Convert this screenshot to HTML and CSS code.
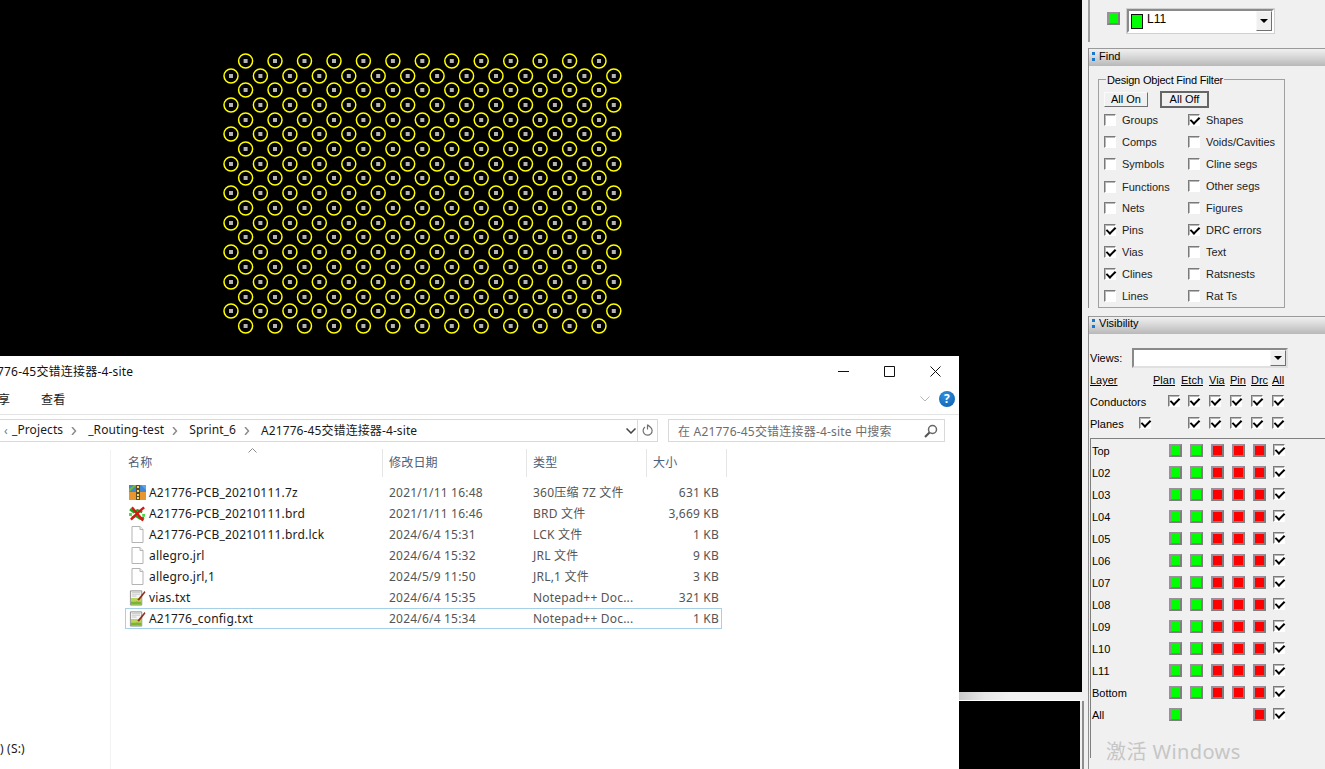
FILE: index.html
```html
<!DOCTYPE html>
<html lang="zh-CN">
<head>
<meta charset="utf-8">
<title>Allegro</title>
<link rel="stylesheet" href="styles.css">
</head>
<body>
<svg class="defs" width="0" height="0" aria-hidden="true">
  <defs>
    <g id="via">
      <circle r="7" fill="none" stroke="#ffff00" stroke-width="1.5"/>
      <rect x="-2" y="-2" width="4" height="4" fill="#b4b4b4"/>
    </g>
    <g id="row-a">
      <use href="#via" x="245.6"/><use href="#via" x="275"/><use href="#via" x="304.5"/><use href="#via" x="334"/><use href="#via" x="363.4"/><use href="#via" x="392.9"/><use href="#via" x="422.3"/><use href="#via" x="451.8"/><use href="#via" x="481.2"/><use href="#via" x="510.7"/><use href="#via" x="540.1"/><use href="#via" x="569.6"/><use href="#via" x="599"/>
    </g>
    <g id="row-b">
      <use href="#via" x="231"/><use href="#via" x="260.4"/><use href="#via" x="289.9"/><use href="#via" x="319.3"/><use href="#via" x="348.8"/><use href="#via" x="378.2"/><use href="#via" x="407.7"/><use href="#via" x="437.1"/><use href="#via" x="466.6"/><use href="#via" x="496"/><use href="#via" x="525.5"/><use href="#via" x="554.9"/><use href="#via" x="584.4"/><use href="#via" x="613.8"/>
    </g>
    <symbol id="i-doc" viewBox="0 0 16 17">
      <path d="M2.5 .5h8l3 3v13h-11z" fill="#fff" stroke="#b3b3b3"/>
      <path d="M10.5 .5v3h3" fill="#f0f0f0" stroke="#b3b3b3"/>
    </symbol>
    <symbol id="i-zip" viewBox="0 0 17 15">
      <rect y="0" width="17" height="7" fill="#3f86d6"/>
      <rect y="7" width="17" height="8" fill="#e8962e"/>
      <path d="M0 4l5-4h3L0 7z" fill="#6cbb3c"/>
      <path d="M12 0h5v5z" fill="#5aa7ea"/>
      <rect x="7" width="4" height="15" fill="#5b4a2a"/>
      <path d="M8 1h2v2H8zM8 5h2v2H8zM8 9h2v2H8zM8 12h2v2H8z" fill="#f6dc5c"/>
    </symbol>
    <symbol id="i-brd" viewBox="0 0 18 16">
      <path d="M1 3l4 3 4-2 5 2M3 12l4-2 5 3 4-1" fill="none" stroke="#18a818" stroke-width="2.4"/>
      <path d="M3 1l6 7 6 7M16 1L9 7l-7 7" fill="none" stroke="#d81818" stroke-width="2.6"/>
      <path d="M0 7h3v3H0zM14 8h3v3h-3z" fill="#48d848"/>
    </symbol>
    <symbol id="i-note" viewBox="0 0 18 17">
      <path d="M1.500 1.500h12v15h-12z" fill="#f6f6f6" stroke="#8a8a8a"/>
      <path d="M3 3h9M3 5h9M3 7h5" stroke="#c4c4c4"/>
      <path d="M2 9h11v7H2z" fill="#b6d85a"/>
      <path d="M2 13h11v3H2z" fill="#7db436"/>
      <path d="M16.500 1.500L9 10.500l-1 2.500 2.500-1L17.500 3z" fill="#8c2f1c"/>
      <path d="M9 10.500L8 13l2.500-1z" fill="#f3d48a"/>
    </symbol>
    <symbol id="i-sep" viewBox="0 0 6 8">
      <path d="M1 0l3.500 4L1 8" fill="none" stroke="#8c8c8c" stroke-width="1.500"/>
    </symbol>
  </defs>
</svg>

<div class="screen">
  <main class="canvas">
    <div class="board">
      <svg class="vias" width="1082" height="356" aria-label="via array">
        <use href="#row-a" y="61"/><use href="#row-b" y="76"/><use href="#row-a" y="90"/><use href="#row-b" y="105"/><use href="#row-a" y="120"/><use href="#row-b" y="134"/><use href="#row-a" y="149"/><use href="#row-b" y="164"/><use href="#row-a" y="178"/><use href="#row-b" y="193"/><use href="#row-a" y="208"/><use href="#row-b" y="223"/><use href="#row-a" y="237"/><use href="#row-b" y="252"/><use href="#row-a" y="267"/><use href="#row-b" y="282"/><use href="#row-a" y="297"/><use href="#row-b" y="311"/><use href="#row-a" y="326"/>
      </svg>
    </div>
    <div class="strip"></div>
    <div class="board-lower"></div>

    <section class="explorer">
      <header class="ex-title">
        <span class="ex-title-text">A21776-45交错连接器-4-site</span>
        <div class="ex-controls">
          <svg width="11" height="11" viewBox="0 0 11 11"><path d="M0 5.500h11" stroke="#111"/></svg>
          <svg width="11" height="11" viewBox="0 0 11 11"><path d="M.5 .5h10v10H.5z" fill="none" stroke="#111"/></svg>
          <svg width="11" height="11" viewBox="0 0 11 11"><path d="M.5 .5l10 10M10.500 .5l-10 10" stroke="#111"/></svg>
        </div>
      </header>
      <div class="ex-ribbon">
        <span class="tab-share">享</span>
        <span class="tab-view">查看</span>
        <svg class="rib-chev" width="10" height="6" viewBox="0 0 10 6"><path d="M.5 .5L5 5 9.500 .5" fill="none" stroke="#b5b5b5"/></svg>
        <span class="help">?</span>
      </div>
      <div class="ex-address">
        <div class="addr">
          <span class="crumb-back">‹</span>
          <span class="crumb">_Projects</span><svg class="sep" width="25" height="8"><use href="#i-sep" x="8" width="6" height="8"/></svg>
          <span class="crumb">_Routing-test</span><svg class="sep" width="25" height="8"><use href="#i-sep" x="8" width="6" height="8"/></svg>
          <span class="crumb">Sprint_6</span><svg class="sep" width="25" height="8"><use href="#i-sep" x="8" width="6" height="8"/></svg>
          <span class="crumb">A21776-45交错连接器-4-site</span>
          <svg class="addr-drop" width="10" height="6" viewBox="0 0 10 6"><path d="M.5 .5L5 5 9.500 .5" fill="none" stroke="#444" stroke-width="1.500"/></svg>
          <span class="addr-refresh">
            <svg width="12" height="13" viewBox="0 0 12 13"><path d="M8.500 3.200A4.500 4.500 0 1 1 3 3M5.500 .5v5M8.500 3.200L5.500 .8" fill="none" stroke="#707070" stroke-width="1.200"/></svg>
          </span>
        </div>
        <div class="search">
          <span>在 A21776-45交错连接器-4-site 中搜索</span>
          <svg width="14" height="14" viewBox="0 0 14 14"><circle cx="8.500" cy="5.500" r="4" fill="none" stroke="#666" stroke-width="1.500"/><path d="M5.500 8.500L1 13" stroke="#555" stroke-width="2.200"/></svg>
        </div>
      </div>
      <div class="ex-body">
        <nav class="ex-nav"><span class="drive">) (S:)</span></nav>
        <div class="ex-list">
          <div class="cols">
            <div class="col col-name">名称
              <svg class="caret" width="9" height="5" viewBox="0 0 9 5"><path d="M.5 4.500l4-4 4 4" fill="none" stroke="#8a8a8a"/></svg>
            </div>
            <div class="col">修改日期</div>
            <div class="col">类型</div>
            <div class="col">大小</div>
          </div>
          <div class="file">
            <div class="f-name"><svg class="ico" width="17" height="15"><use href="#i-zip"/></svg>A21776-PCB_20210111.7z</div>
            <div>2021/1/11 16:48</div><div>360压缩 7Z 文件</div><div class="f-size">631 KB</div>
          </div>
          <div class="file">
            <div class="f-name"><svg class="ico" width="17" height="16"><use href="#i-brd"/></svg>A21776-PCB_20210111.brd</div>
            <div>2021/1/11 16:46</div><div>BRD 文件</div><div class="f-size">3,669 KB</div>
          </div>
          <div class="file">
            <div class="f-name"><svg class="ico" width="17" height="17"><use href="#i-doc"/></svg>A21776-PCB_20210111.brd.lck</div>
            <div>2024/6/4 15:31</div><div>LCK 文件</div><div class="f-size">1 KB</div>
          </div>
          <div class="file">
            <div class="f-name"><svg class="ico" width="17" height="17"><use href="#i-doc"/></svg>allegro.jrl</div>
            <div>2024/6/4 15:32</div><div>JRL 文件</div><div class="f-size">9 KB</div>
          </div>
          <div class="file">
            <div class="f-name"><svg class="ico" width="17" height="17"><use href="#i-doc"/></svg>allegro.jrl,1</div>
            <div>2024/5/9 11:50</div><div>JRL,1 文件</div><div class="f-size">3 KB</div>
          </div>
          <div class="file">
            <div class="f-name"><svg class="ico" width="17" height="17"><use href="#i-note"/></svg>vias.txt</div>
            <div>2024/6/4 15:35</div><div>Notepad++ Doc...</div><div class="f-size">321 KB</div>
          </div>
          <div class="file file-sel">
            <div class="f-name"><svg class="ico" width="17" height="17"><use href="#i-note"/></svg>A21776_config.txt</div>
            <div>2024/6/4 15:34</div><div>Notepad++ Doc...</div><div class="f-size">1 KB</div>
          </div>
        </div>
      </div>
    </section>
  </main>

  <aside class="side">
    <div class="side-top">
      <span class="sw green sw-top"></span>
      <div class="combo">
        <span class="combo-sw"></span>
        <span class="combo-text">L11</span>
        <span class="drop"></span>
      </div>
    </div>

    <section class="panel panel-find">
      <h2 class="panel-head"><span class="grip"></span>Find</h2>
      <div class="group">
        <span class="legend">Design Object Find Filter</span>
        <div class="btns">
          <span class="btn">All On</span>
          <span class="btn btn-def">All Off</span>
        </div>
        <div class="filters">
          <label class="fl"><span class="cb"></span>Groups</label>
          <label class="fl"><span class="cb on"></span>Shapes</label>
          <label class="fl"><span class="cb"></span>Comps</label>
          <label class="fl"><span class="cb"></span>Voids/Cavities</label>
          <label class="fl"><span class="cb"></span>Symbols</label>
          <label class="fl"><span class="cb"></span>Cline segs</label>
          <label class="fl fl-low"><span class="cb"></span>Functions</label>
          <label class="fl"><span class="cb"></span>Other segs</label>
          <label class="fl"><span class="cb"></span>Nets</label>
          <label class="fl"><span class="cb"></span>Figures</label>
          <label class="fl"><span class="cb on"></span>Pins</label>
          <label class="fl"><span class="cb on"></span>DRC errors</label>
          <label class="fl"><span class="cb on"></span>Vias</label>
          <label class="fl"><span class="cb"></span>Text</label>
          <label class="fl"><span class="cb on"></span>Clines</label>
          <label class="fl"><span class="cb"></span>Ratsnests</label>
          <label class="fl"><span class="cb"></span>Lines</label>
          <label class="fl"><span class="cb"></span>Rat Ts</label>
        </div>
      </div>
    </section>

    <section class="panel panel-vis">
      <h2 class="panel-head panel-head-vis"><span class="grip"></span>Visibility</h2>
      <div class="views"><span>Views:</span><div class="views-box"><span class="drop"></span></div></div>
      <div class="vhead"><u>Layer</u><u>Plan</u><u>Etch</u><u>Via</u><u>Pin</u><u>Drc</u><u>All</u></div>
      <div class="vrow vrow-cond"><span>Conductors</span><span class="cb on"></span><span class="cb on"></span><span class="cb on"></span><span class="cb on"></span><span class="cb on"></span><span class="cb on"></span></div>
      <div class="vrow vrow-plane"><span>Planes</span><span class="cb on"></span><span class="cb on"></span><span class="cb on"></span><span class="cb on"></span><span class="cb on"></span><span class="cb on"></span></div>
      <div class="layers">
        <div class="lrow"><span>Top</span><span class="sw green"></span><span class="sw green"></span><span class="sw red"></span><span class="sw red"></span><span class="sw red"></span><span class="cb on"></span></div>
        <div class="lrow"><span>L02</span><span class="sw green"></span><span class="sw green"></span><span class="sw red"></span><span class="sw red"></span><span class="sw red"></span><span class="cb on"></span></div>
        <div class="lrow"><span>L03</span><span class="sw green"></span><span class="sw green"></span><span class="sw red"></span><span class="sw red"></span><span class="sw red"></span><span class="cb on"></span></div>
        <div class="lrow"><span>L04</span><span class="sw green"></span><span class="sw green"></span><span class="sw red"></span><span class="sw red"></span><span class="sw red"></span><span class="cb on"></span></div>
        <div class="lrow"><span>L05</span><span class="sw green"></span><span class="sw green"></span><span class="sw red"></span><span class="sw red"></span><span class="sw red"></span><span class="cb on"></span></div>
        <div class="lrow"><span>L06</span><span class="sw green"></span><span class="sw green"></span><span class="sw red"></span><span class="sw red"></span><span class="sw red"></span><span class="cb on"></span></div>
        <div class="lrow"><span>L07</span><span class="sw green"></span><span class="sw green"></span><span class="sw red"></span><span class="sw red"></span><span class="sw red"></span><span class="cb on"></span></div>
        <div class="lrow"><span>L08</span><span class="sw green"></span><span class="sw green"></span><span class="sw red"></span><span class="sw red"></span><span class="sw red"></span><span class="cb on"></span></div>
        <div class="lrow"><span>L09</span><span class="sw green"></span><span class="sw green"></span><span class="sw red"></span><span class="sw red"></span><span class="sw red"></span><span class="cb on"></span></div>
        <div class="lrow"><span>L10</span><span class="sw green"></span><span class="sw green"></span><span class="sw red"></span><span class="sw red"></span><span class="sw red"></span><span class="cb on"></span></div>
        <div class="lrow"><span>L11</span><span class="sw green"></span><span class="sw green"></span><span class="sw red"></span><span class="sw red"></span><span class="sw red"></span><span class="cb on"></span></div>
        <div class="lrow"><span>Bottom</span><span class="sw green"></span><span class="sw green"></span><span class="sw red"></span><span class="sw red"></span><span class="sw red"></span><span class="cb on"></span></div>
        <div class="lrow"><span>All</span><span class="sw green"></span><span></span><span></span><span></span><span class="sw red"></span><span class="cb on"></span></div>
      </div>
    </section>
    <div class="watermark">激活 Windows</div>
  </aside>
</div>
</body>
</html>
```

FILE: styles.css
```css
* { box-sizing: border-box; }
html, body { margin: 0; padding: 0; height: 100%; overflow: hidden; background: #000; }
body { font-family: "Noto Sans", "Noto Sans CJK SC", sans-serif; font-size: 12px; letter-spacing: .2px; color: #1a1a1a; }
.defs { position: absolute; }

.screen { display: flex; width: 1325px; height: 769px; }

/* board canvas */
.canvas { position: relative; width: 1082px; flex: none; display: flex; flex-direction: column; background: #000; }
.board { height: 692px; flex: none; position: relative; background: #000; }
.vias { position: absolute; left: 0; top: 0; display: block; }
.strip { height: 9px; flex: none; background: linear-gradient(90deg, #c9c9c9 959px, #e6e6e6 985px, #f0f0f0 1010px); border-bottom: 1px solid #fff; }
.board-lower { flex: 1; border-right: 2px solid #f0f0f0; }

/* explorer window */
.explorer { position: absolute; left: 0; top: 356px; width: 959px; height: 413px; background: #fff; display: flex; flex-direction: column; overflow: hidden; }
.ex-title { height: 30px; flex: none; display: flex; align-items: center; justify-content: space-between; padding-right: 18px; }
.ex-title-text { margin-left: -25px; color: #111; }
.ex-controls { display: flex; gap: 35px; align-items: center; }
.ex-controls svg { display: block; }
.ex-ribbon { height: 29px; flex: none; display: flex; align-items: center; border-bottom: 1px solid #e4e4e4; padding: 0 4px 2px 0; }
.tab-share { margin-left: -2px; width: 43px; }
.rib-chev { margin-left: auto; margin-right: 9px; }
.help { width: 16px; height: 16px; border-radius: 50%; background: radial-gradient(circle at 40% 30%, #2f8fe0, #0b5cab); color: #fff; font-weight: 700; font-size: 12px; line-height: 16px; text-align: center; }
.ex-address { height: 27px; flex: none; padding-top: 4px; display: flex; gap: 10px; padding-right: 14px; }
.addr { width: 658px; height: 23px; flex: none; display: flex; align-items: center; border: 1px solid #d9d9d9; border-left: 0; white-space: nowrap; }
.crumb-back { width: 12px; flex: none; color: #777; text-align: center; }
.crumb { padding-bottom: 2px; letter-spacing: .1px; }
.sep { flex: none; }
.addr-drop { margin-left: auto; margin-right: 1px; }
.addr-refresh { width: 20px; height: 21px; flex: none; border-left: 1px solid #d9d9d9; display: flex; align-items: center; justify-content: center; }
.search { flex: 1; height: 23px; border: 1px solid #d9d9d9; display: flex; align-items: center; justify-content: space-between; padding: 0 6px 0 9px; color: #6d6d6d; white-space: nowrap; }
.ex-body { flex: 1; display: flex; min-height: 0; }
.ex-nav { width: 111px; flex: none; border-right: 1px solid #f2f2f2; margin-top: 8px; padding-top: 290px; overflow: hidden; }
.drive { display: block; }
.ex-list { flex: 1; padding: 7px 0 0 14px; }
.cols { display: grid; grid-template-columns: 258px 144px 120px 80px; height: 27px; margin-bottom: 6px; color: #4c607a; }
.col { border-right: 1px solid #e5e5e5; padding-left: 6px; line-height: 28px; position: relative; }
.col-name { padding-left: 3px; }
.caret { position: absolute; left: 123px; top: -1px; }
.file { display: grid; grid-template-columns: 257px 144px 120px 76px; height: 21px; width: 597px; align-items: center; border: 1px solid transparent; margin: 0; color: #555; }
.file > div { padding-left: 6px; white-space: nowrap; line-height: 19px; }
.file > .f-name { padding-left: 3px; display: flex; align-items: center; color: #1a1a1a; }
.file > .f-size { padding: 0 4px 0 0; text-align: right; }
.file-sel { border-color: #a6cfe8; }
.ico { flex: none; margin-right: 3px; display: block; }

/* side panel */
.side { position: relative; flex: 1; background: #f0f0f0; color: #000; padding-left: 6px; font-family: "Liberation Sans", Arial, sans-serif; font-size: 11px; letter-spacing: 0; overflow: hidden; }
.side::after { content: ""; position: absolute; left: 0; top: 701px; bottom: 0; width: 2px; background: #8e8e8e; }
.side-top { height: 48px; position: relative; padding: 9px 0 0 19px; display: flex; align-items: flex-start; gap: 7px; }
.side-top::before { content: ""; position: absolute; left: 0; top: 0; width: 2px; height: 42px; background: #a0a0a0; }
.sw { display: block; width: 13px; height: 13px; border: 2px solid #7f7f7f; border-top-color: #9a8f9a; border-left-color: #9a8f9a; }
.sw.green { background: #00ff00; }
.sw.red { background: #ff0000; }
.sw-top { margin-top: 3px; }
.combo { width: 147px; height: 24px; position: relative; border: 2px solid; border-color: #8a8a8a #fff #fff #8a8a8a; outline: 1px solid #d0d0d0; outline-offset: 0; background: #fff; display: flex; align-items: center; padding: 0 2px; }
.combo-sw { width: 12px; height: 15px; background: #00ff00; border: 1px solid #111; margin-right: 4px; margin-top: 1px; }
.combo-text { font-size: 12px; margin-top: -4px; }
.drop { position: absolute; right: 0; top: 0; bottom: 0; width: 16px; background: #f0f0f0; border: 1px solid; border-color: #f8f8f8 #707070 #707070 #f8f8f8; }
.drop::after { content: ""; position: absolute; left: 3px; top: 50%; margin-top: -2px; border: 4px solid transparent; border-top: 4px solid #000; border-bottom: 0; }

.panel { border-left: 1px solid #8e8e8e; }
.panel-head { margin: 0; height: 18px; font-weight: 400; font-size: 11px; display: flex; align-items: center; border-top: 1px solid #9a9a9a; background: linear-gradient(180deg, #f0f0f0, #d8d8d8 45%, #b8b8b8); padding: 0 0 3px 3px; }
.panel-head-vis { padding-bottom: 5px; }
.grip { width: 3px; height: 9px; margin-right: 4px; background: linear-gradient(180deg, #1878d0 0 3px, transparent 3px 6px, #1878d0 6px 9px); }
.panel-find { height: 260px; margin-bottom: 8px; }
.group { position: relative; margin: 13px 0 0 9px; width: 187px; height: 229px; border: 1px solid #a0a0a0; padding: 11px 0 0 5px; }
.legend { position: absolute; left: 7px; top: -6px; background: #f0f0f0; padding: 0 1px; line-height: 13px; letter-spacing: -.2px; }
.btns { display: flex; gap: 12px; height: 18px; align-items: flex-start; }
.btn { display: block; width: 44px; height: 15px; margin-top: 1px; text-align: center; line-height: 13px; background: #f0f0f0; border: 1px solid; border-color: #fafafa #707070 #707070 #fafafa; }
.btn-def { width: 49px; height: 17px; margin-top: 0; line-height: 13px; border-width: 2px; border-color: #666; }
.filters { display: grid; grid-template-columns: 84px 84px; grid-auto-rows: 22px; }
.fl { display: flex; align-items: center; gap: 6px; white-space: nowrap; color: #222; }
.fl-low { padding-top: 2px; }

.cb { display: block; position: relative; flex: none; width: 12px; height: 12px; background: #fff; border: 1px solid; border-color: #7a7a7a #fff #fff #7a7a7a; box-shadow: inset 1px 1px #b8b8b8; }
.cb.on::after { content: ""; position: absolute; left: 3px; top: 0; width: 4px; height: 7px; border: solid #000; border-width: 0 2px 2px 0; transform: rotate(45deg); }

.panel-vis { height: 453px; }
.views { display: flex; align-items: center; height: 20px; margin-top: 14px; margin-bottom: 1px; padding-left: 1px; }
.views > span { width: 42px; }
.views-box { position: relative; width: 156px; height: 20px; background: #fff; border: 2px solid; border-color: #8a8a8a #e0e0e0 #e0e0e0 #8a8a8a; }
.vhead { display: grid; grid-template-columns: 63px 28px 28px 21px 21px 21px 21px; height: 22px; align-items: center; padding-left: 1px; }
.vrow { display: grid; height: 22px; align-items: center; padding-left: 1px; }
.vrow .cb { margin-top: -3px; }
.vrow-cond { grid-template-columns: 78px 20px 21px 21px 21px 21px 21px; }
.vrow-plane { grid-template-columns: 49px 49px 21px 21px 21px 21px 21px; }
.layers { margin: 3px 0 0 1px; border-top: 1px solid #808080; border-left: 1px solid #808080; padding-top: 1px; height: 320px; }
.lrow { display: grid; grid-template-columns: 77px 21px 21px 21px 21px 20px 21px; height: 22px; align-items: center; padding-left: 1px; }
.lrow .sw, .lrow .cb { margin-top: -2px; }
.watermark { position: absolute; left: 24px; top: 739px; font-family: "Noto Sans", "Noto Sans CJK SC", sans-serif; font-size: 20px; line-height: 26px; letter-spacing: .4px; color: #c6c6c6; white-space: nowrap; }
```
